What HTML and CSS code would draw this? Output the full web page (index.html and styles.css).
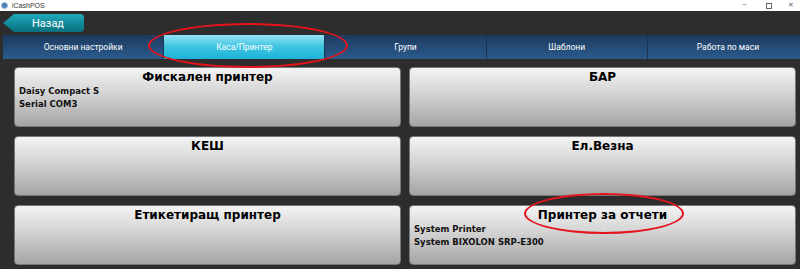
FILE: index.html
```html
<!DOCTYPE html>
<html lang="bg">
<head>
  <meta charset="UTF-8" />
  <title>iCashPOS</title>
  <link rel="stylesheet" href="styles.css">
</head>
<body>

  <!-- Заглавна лента -->
  <div class="titlebar">
    <span class="app-icon"></span>
    <span class="app-name">iCashPOS</span>
    <div class="win-controls">
      <span class="win-btn">&#8211;</span>
      <span class="win-btn restore"></span>
      <span class="win-btn close">&#10005;</span>
    </div>
  </div>

  <div class="app">
    <div class="toolbar">
      <button class="back">Назад</button>
    </div>

    <!-- Табове -->
    <div class="tabs">
      <div class="tab">Основни настройки</div>
      <div class="tab active">Каса/Принтер</div>
      <div class="tab">Групи</div>
      <div class="tab">Шаблони</div>
      <div class="tab">Работа по маси</div>
    </div>

    <!-- Устройства -->
    <div class="devices">
      <div class="device">
        <div class="device-title">Фискален принтер</div>
        <div class="device-info">Daisy Compact S</div>
        <div class="device-info">Serial COM3</div>
      </div>
      <div class="device">
        <div class="device-title">БАР</div>
      </div>
      <div class="device">
        <div class="device-title">КЕШ</div>
      </div>
      <div class="device">
        <div class="device-title">Ел.Везна</div>
      </div>
      <div class="device">
        <div class="device-title">Етикетиращ принтер</div>
      </div>
      <div class="device">
        <div class="device-title">Принтер за отчети</div>
        <div class="device-info">System Printer</div>
        <div class="device-info">System BIXOLON SRP-E300</div>
      </div>
    </div>

    <!-- червени маркировки -->
    <div class="mark mark-tab"></div>
    <div class="mark mark-report"></div>
  </div>

</body>
</html>
```

FILE: styles.css
```css
body {
  margin: 0;
  padding: 0;
  background: #2d2d2d;
  font-family: Roboto, sans-serif;
  overflow: hidden;
}

.titlebar {
  height: 11px;
  background: white;
  display: flex;
  align-items: center;
  padding-left: 1px;
}

.app-icon {
  width: 7px;
  height: 7px;
  border-radius: 50%;
  background: #4a7fb5;
  border: 1px solid #9cc0e0;
  box-sizing: border-box;
}

.app-name {
  font-family: "Liberation Sans", sans-serif;
  font-size: 7px;
  color: #333;
  margin-left: 4px;
}

.win-controls {
  margin-left: auto;
  display: flex;
  align-items: center;
  height: 11px;
}

.win-btn {
  width: 23px;
  text-align: center;
  font-size: 7px;
  color: #666;
  line-height: 11px;
}

.win-btn.restore {
  width: 4px;
  height: 4px;
  border: 1px solid #666;
  margin: 0 10px;
}

.win-btn.close {
  width: 18px;
}

.app {
  position: relative;
}

.toolbar {
  padding: 3px 0 0 3px;
  height: 18px;
}

.back {
  display: block;
  width: 81px;
  height: 18px;
  border: none;
  padding: 0 0 0 9px;
  border-radius: 0 4px 4px 0;
  clip-path: polygon(11px 0, 100% 0, 100% 100%, 11px 100%, 0 50%);
  background: linear-gradient(#23a9bb, #108797 60%, #0b6e7d);
  color: white;
  font-family: Roboto, sans-serif;
  font-size: 11px;
}

.tabs {
  display: flex;
  width: 805px;
  height: 24px;
  margin: 3px 0 0 3px;
  background: linear-gradient(#1d3a5e, #2a5b8d);
}

.tab {
  flex: 1;
  display: flex;
  align-items: center;
  justify-content: center;
  color: white;
  font-size: 8.5px;
  border-left: 1px solid #1a3352;
}

.tab:first-child {
  border-left: none;
}

.tab.active {
  background: linear-gradient(#94e2f3, #3cc4e2 50%, #1db3d6);
}

.devices {
  display: grid;
  grid-template-columns: 387px 387px;
  grid-auto-rows: 60px;
  column-gap: 8px;
  row-gap: 9px;
  padding: 8px 0 0 14px;
}

.device {
  box-sizing: border-box;
  border: 1px solid #777;
  border-radius: 4px;
  background: linear-gradient(#f3f3f3, #cfcfcf 50%, #a4a4a4);
  padding: 1px 4px;
  font-family: "DejaVu Sans", sans-serif;
  font-weight: bold;
}

.device-title {
  text-align: center;
  font-size: 12px;
  line-height: 16px;
  color: #000;
}

.device-info {
  font-size: 8.5px;
  line-height: 13px;
  color: #111;
}

.mark {
  position: absolute;
  border: 2px solid #e5141c;
  border-radius: 50%;
}

.mark-tab {
  left: 148px;
  top: 12px;
  width: 196px;
  height: 41px;
}

.mark-report {
  left: 524px;
  top: 182px;
  width: 156px;
  height: 37px;
}
```
